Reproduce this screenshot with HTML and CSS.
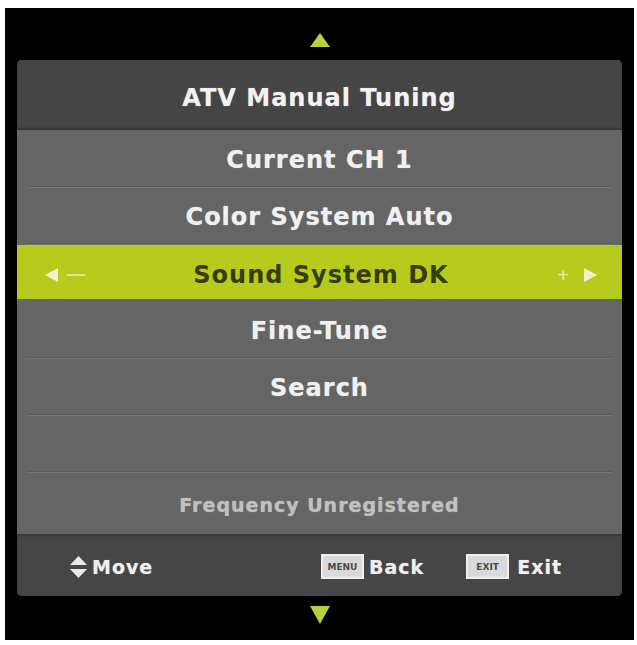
FILE: index.html
```html
<!DOCTYPE html>
<html>
<head>
<meta charset="utf-8">
<link rel="stylesheet" href="styles.css">
</head>
<body>
<div class="screen">
  <div class="nav nav-top">
    <svg width="20" height="14" viewBox="0 0 20 14"><polygon points="10,0 20,14 0,14" fill="#b9d03e"/></svg>
  </div>
  <div class="panel">
    <div class="title">ATV Manual Tuning</div>
    <div class="row"><span class="label">Current CH 1</span></div>
    <div class="row"><span class="label">Color System Auto</span></div>
    <div class="row active">
      <span class="side side-left">
        <svg width="13" height="14" viewBox="0 0 13 14"><polygon points="0,7 13,0 13,14" fill="#eef3cf"/></svg>
        <span class="dash"></span>
      </span>
      <span class="label">Sound System DK</span>
      <span class="side side-right">
        <span class="plus">+</span>
        <svg width="13" height="14" viewBox="0 0 13 14"><polygon points="13,7 0,0 0,14" fill="#eef3cf"/></svg>
      </span>
    </div>
    <div class="row"><span class="label">Fine-Tune</span></div>
    <div class="row"><span class="label">Search</span></div>
    <div class="row"></div>
    <div class="row info"><span class="label">Frequency Unregistered</span></div>
    <div class="footer">
      <div class="hint">
        <svg class="updown" width="17" height="22" viewBox="0 0 17 22"><polygon points="8.5,0 17,9 0,9" fill="#eaeaea"/><polygon points="0,13 17,13 8.5,22" fill="#eaeaea"/></svg>
        <span>Move</span>
      </div>
      <div class="hint hint-back">
        <span class="key">MENU</span>
        <span>Back</span>
      </div>
      <div class="hint hint-exit">
        <span class="key">EXIT</span>
        <span>Exit</span>
      </div>
    </div>
  </div>
  <div class="nav nav-bottom">
    <svg width="20" height="18" viewBox="0 0 20 18"><polygon points="0,0 20,0 10,18" fill="#b9d03e"/></svg>
  </div>
</div>
</body>
</html>
```

FILE: styles.css
```css
html, body {
  margin: 0;
  padding: 0;
  background: #ffffff;
}

.screen {
  margin: 8px 0 0 5px;
  width: 629px;
  height: 632px;
  box-sizing: border-box;
  padding: 0 12px;
  background: #000000;
  display: flex;
  flex-direction: column;
  font-family: "DejaVu Sans", Verdana, sans-serif;
  font-weight: bold;
}

.nav {
  display: flex;
  justify-content: center;
  align-items: flex-start;
}

.nav svg {
  display: block;
}

.nav-top {
  height: 52px;
  box-sizing: border-box;
  padding-top: 25px;
}

.nav-bottom {
  height: 43px;
  box-sizing: border-box;
  padding-top: 10px;
}

.panel {
  background: #656565;
  border-radius: 5px;
  overflow: hidden;
  display: flex;
  flex-direction: column;
}

.title {
  height: 70px;
  box-sizing: border-box;
  padding-top: 5px;
  background: #454545;
  color: #f2f2f2;
  font-size: 24px;
  letter-spacing: 1px;
  display: flex;
  align-items: center;
  justify-content: center;
  box-shadow: inset 0 -2px 2px rgba(0, 0, 0, 0.25);
  text-shadow: 0 0 1px rgba(255, 255, 255, 0.5);
}

.row {
  height: 57px;
  margin: 0 10px;
  box-sizing: border-box;
  padding-top: 4px;
  border-bottom: 1px solid #5a5a5a;
  box-shadow: 0 1px 0 #747474;
  color: #f0f0f0;
  font-size: 24px;
  letter-spacing: 1px;
  display: grid;
  grid-template-columns: 1fr auto 1fr;
  align-items: center;
  text-shadow: 0 0 1px rgba(255, 255, 255, 0.5);
}

.row .label {
  grid-column: 2;
}

.row.active {
  margin: 1px 0 2px;
  height: 54px;
  padding: 5px 25px 0 28px;
  background: #b6cb1c;
  color: #363c0c;
  border-bottom: none;
  box-shadow: none;
  text-shadow: none;
}

.side {
  display: flex;
  align-items: center;
}

.side-left {
  grid-column: 1;
  justify-self: start;
  gap: 9px;
}

.side-right {
  grid-column: 3;
  justify-self: end;
  gap: 14px;
}

.dash {
  width: 18px;
  height: 2px;
  background: #d8e59a;
}

.plus {
  color: #e4edb4;
  font-size: 16px;
  font-weight: normal;
  letter-spacing: 0;
}

.row.info {
  height: 62px;
  border-bottom: none;
  box-shadow: none;
  color: #c0c0c0;
  font-size: 19px;
  padding-top: 3px;
  padding-bottom: 0;
}

.footer {
  height: 62px;
  box-sizing: border-box;
  padding: 3px 60px 0 53px;
  background: #464646;
  display: flex;
  align-items: center;
  color: #efefef;
  font-size: 19px;
  letter-spacing: 1px;
  box-shadow: inset 0 2px 2px rgba(0, 0, 0, 0.2);
  text-shadow: 0 0 1px rgba(255, 255, 255, 0.5);
}

.hint {
  display: flex;
  align-items: center;
  gap: 5px;
}

.updown {
  display: block;
}

.hint-back {
  margin-left: auto;
}

.hint-exit {
  margin-left: 42px;
  gap: 8px;
}

.key {
  width: 43px;
  height: 25px;
  box-sizing: border-box;
  background: #d9d9d9;
  border: 2px solid #f0f0f0;
  color: #4a4a4a;
  font-size: 9px;
  letter-spacing: 0;
  display: flex;
  align-items: center;
  justify-content: center;
  text-shadow: none;
}
```
